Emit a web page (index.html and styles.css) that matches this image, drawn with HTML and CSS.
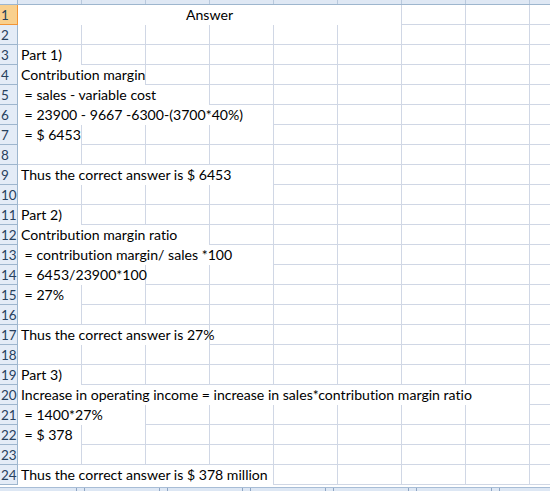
FILE: index.html
```html
<!DOCTYPE html>
<html>

<head>
    <link rel="stylesheet" href="styles.css">
</head>

<body>
    <div class="sheet">
        <div class="colhead">
            <div class="corner"></div>
        </div>
        <div class="row"><div class="rh sel">1</div><div class="c s6 center">Answer</div></div>
        <div class="row"><div class="rh">2</div></div>
        <div class="row"><div class="rh">3</div><div class="c s1">Part 1)</div></div>
        <div class="row"><div class="rh">4</div><div class="c s2">Contribution margin</div></div>
        <div class="row"><div class="rh">5</div><div class="c s3"> = sales - variable cost</div></div>
        <div class="row"><div class="rh">6</div><div class="c s4"> = 23900 - 9667 -6300-(3700*40%)</div></div>
        <div class="row"><div class="rh">7</div><div class="c s1"> = $ 6453</div></div>
        <div class="row"><div class="rh">8</div></div>
        <div class="row"><div class="rh">9</div><div class="c s4">Thus the correct answer is $ 6453</div></div>
        <div class="row"><div class="rh">10</div></div>
        <div class="row"><div class="rh">11</div><div class="c s1">Part 2)</div></div>
        <div class="row"><div class="rh">12</div><div class="c s3">Contribution margin ratio</div></div>
        <div class="row"><div class="rh">13</div><div class="c s4"> = contribution margin/ sales *100</div></div>
        <div class="row"><div class="rh">14</div><div class="c s2"> = 6453/23900*100</div></div>
        <div class="row"><div class="rh">15</div><div class="c s1"> = 27%</div></div>
        <div class="row"><div class="rh">16</div></div>
        <div class="row"><div class="rh">17</div><div class="c s3">Thus the correct answer is 27%</div></div>
        <div class="row"><div class="rh">18</div></div>
        <div class="row"><div class="rh">19</div><div class="c s1">Part 3)</div></div>
        <div class="row"><div class="rh">20</div><div class="c s8">Increase in operating income = increase in sales*contribution margin ratio</div></div>
        <div class="row"><div class="rh">21</div><div class="c s2"> = 1400*27%</div></div>
        <div class="row"><div class="rh">22</div><div class="c s1"> = $ 378</div></div>
        <div class="row"><div class="rh">23</div></div>
        <div class="row"><div class="rh">24</div><div class="c s4">Thus the correct answer is $ 378 million</div></div>
        <div class="tabs"></div>
    </div>
</body>

</html>
```

FILE: styles.css
```css
body {
    margin: 0;
    background: #fff;
    font-family: Lato, "Open Sans", sans-serif;
    font-variant-ligatures: none;
    overflow: hidden
}

.sheet {
    width: 550px;
    height: 491px;
    overflow: hidden
}

.colhead {
    height: 4px;
    border-bottom: 1px solid #9eb6ce;
    background: repeating-linear-gradient(90deg, #dfe8f4 0 63px, #b9c9dd 63px 64px) 18px 0;
    display: grid;
    grid-template-columns: 18px 1fr
}

.corner {
    background: #e4ecf7;
    border-right: 1px solid #9eb6ce
}

.row {
    height: 19px;
    border-bottom: 1px solid #d0d7e5;
    display: grid;
    grid-template-columns: 18px repeat(8, 64px) 1fr;
    background: repeating-linear-gradient(90deg, #fff 0 63px, #d0d7e5 63px 64px) 18px 0
}

.rh {
    background: #e4ecf7;
    border-right: 1px solid #9eb6ce;
    border-bottom: 1px solid #9eb6ce;
    margin-bottom: -1px;
    box-sizing: border-box;
    height: 20px;
    padding-left: 1px;
    font-size: 13.5px;
    line-height: 21px;
    color: #27415e
}

.rh.sel {
    background: #f9d08e;
    border-right-color: #f29536;
    border-bottom-color: #f29536;
    color: #26405a
}

.c {
    background: #fff;
    margin-right: 1px;
    padding-left: 3px;
    font-size: 14.1px;
    line-height: 20px;
    color: #000;
    white-space: pre
}

.center {
    text-align: center;
    padding-left: 0
}

.s1 { grid-column: span 1 }
.s2 { grid-column: span 2 }
.s3 { grid-column: span 3 }
.s4 { grid-column: span 4 }
.s6 { grid-column: span 6 }
.s8 { grid-column: span 8 }

.tabs {
    margin-top: 2px;
    height: 8px;
    border-top: 1px solid #a8bdd6;
    background: repeating-linear-gradient(90deg, #dde7f4 0 74px, #8fa6c4 74px 75px, #dde7f4 75px 82px, #8fa6c4 82px 83px) 2px 0
}
```
